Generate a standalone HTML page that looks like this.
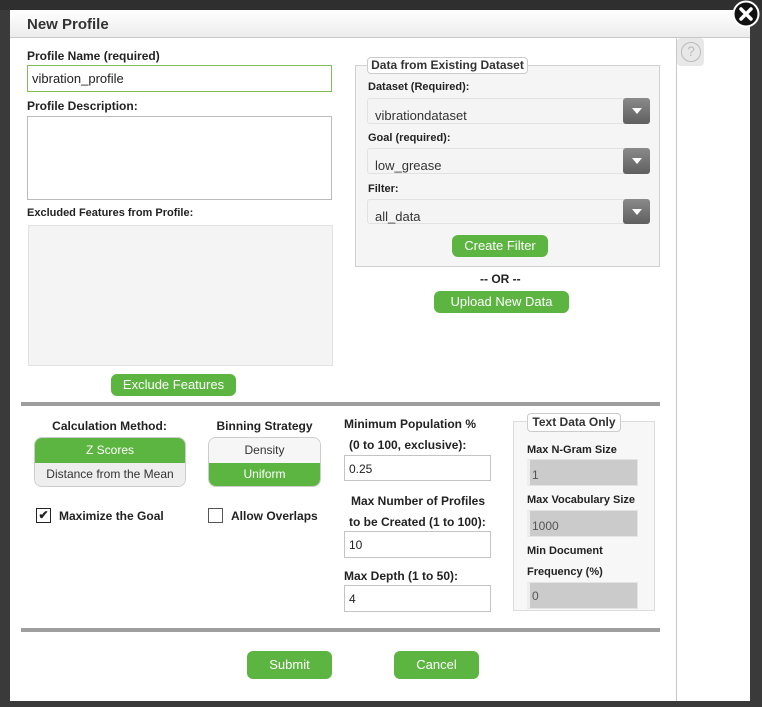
<!DOCTYPE html>
<html><head><meta charset="utf-8"><style>
*{box-sizing:border-box;margin:0;padding:0}
body{width:762px;height:707px;background:#3a3a3a;font-family:"Liberation Sans",sans-serif;position:relative;overflow:hidden;color:#222}
.a{position:absolute}
.b{font-weight:bold;font-size:12px;white-space:nowrap}
.btn{position:absolute;background:#5cb540;color:#fff;border-radius:6px;font-size:13px;text-align:center}
.inp{position:absolute;background:#fff;border:1px solid #c4c4c4;font-size:12px;padding-left:4px}
.sel{position:absolute;background:#f4f4f4;border:1px solid #e2e2e2;border-radius:3px;font-size:13px;padding-left:7px;color:#333}
.sel i{position:absolute;right:-1px;top:-1px;width:27px;bottom:-1px;background:linear-gradient(#8a8a8a,#5f5f5f);border-radius:3px}
.sel i:after{content:"";position:absolute;left:9px;top:10px;border-left:5px solid transparent;border-right:5px solid transparent;border-top:6px solid #fff}
.gi{position:absolute;background:#cbcbcb;border:1px solid #e4e4e4;border-left:3px solid #eee;font-size:12px;padding-left:2px;color:#555}
</style></head><body>
<div class="a" style="left:0;top:0;width:762px;height:10px;background:#2f2f2f"></div>
<div class="a" style="left:10px;top:10px;width:740px;height:691px;background:#fff"></div>
<div class="a" style="left:10px;top:10px;width:740px;height:28px;background:linear-gradient(#fff,#ececec);border-bottom:1px solid #c8c8c8"></div>
<div class="a" style="left:27px;top:16px;font-size:15px;font-weight:bold;color:#333">New Profile</div>
<svg class="a" style="left:732px;top:0" width="28" height="28" viewBox="0 0 28 28"><circle cx="14" cy="14" r="12.5" fill="#111" stroke="#fff" stroke-width="2"/><path d="M9 9L19 19M19 9L9 19" stroke="#fff" stroke-width="3.5" stroke-linecap="round"/></svg>
<div class="a" style="left:676px;top:38px;width:1px;height:663px;background:#c8c8c8"></div>
<div class="a" style="left:677px;top:38px;width:27px;height:28px;background:#e8e8e8;border-radius:4px"></div>
<div class="a" style="left:681px;top:42px;width:20px;height:20px;border:1.5px solid #bbb;border-radius:50%;color:#bbb;font-size:14px;text-align:center;line-height:17px">?</div>

<div class="a b" style="left:27px;top:49px">Profile Name (required)</div>
<div class="inp" style="left:27px;top:65px;width:305px;height:27px;border-color:#7cbd5a;line-height:25px;font-size:13px">vibration_profile</div>
<div class="a b" style="left:27px;top:99px">Profile Description:</div>
<div class="inp" style="left:27px;top:116px;width:305px;height:84px;border-color:#bbb"></div>
<div class="a b" style="left:27px;top:207px;font-size:11px">Excluded Features from Profile:</div>
<div class="a" style="left:28px;top:225px;width:305px;height:141px;background:#f4f4f4;border:1px solid #e2e2e2"></div>
<div class="btn" style="left:111px;top:374px;width:125px;height:22px;line-height:22px">Exclude Features</div>

<div class="a" style="left:355px;top:65px;width:305px;height:202px;background:#f5f5f5;border:1px solid #d0d0d0"></div>
<div class="a" style="left:367px;top:57px;width:161px;height:17px;background:#fff;border:1px solid #ccc;border-radius:4px;font-size:12px;font-weight:bold;text-align:center;line-height:15px;color:#333">Data from Existing Dataset</div>
<div class="a b" style="left:368px;top:81px;font-size:11px">Dataset (Required):</div>
<div class="sel" style="left:367px;top:98px;width:283px;height:26px;line-height:34px">vibrationdataset<i></i></div>
<div class="a b" style="left:368px;top:132px;font-size:11px">Goal (required):</div>
<div class="sel" style="left:367px;top:148px;width:283px;height:26px;line-height:34px">low_grease<i></i></div>
<div class="a b" style="left:368px;top:183px;font-size:11px">Filter:</div>
<div class="sel" style="left:367px;top:199px;width:283px;height:25px;line-height:34px">all_data<i></i></div>
<div class="btn" style="left:452px;top:235px;width:96px;height:22px;line-height:22px">Create Filter</div>
<div class="a b" style="left:480px;top:272px">-- OR --</div>
<div class="btn" style="left:434px;top:291px;width:135px;height:22px;line-height:22px">Upload New Data</div>

<div class="a" style="left:21px;top:402px;width:639px;height:4px;background:#9e9e9e"></div>

<div class="a b" style="left:34px;top:419px;width:151px;text-align:center">Calculation Method:</div>
<div class="a" style="left:34px;top:437px;width:152px;height:50px;border:1px solid #ccc;border-radius:8px;overflow:hidden;font-size:12px;text-align:center">
<div style="height:25px;background:#5cb540;color:#fff;line-height:25px">Z Scores</div>
<div style="height:24px;background:#eee;line-height:23px;color:#333">Distance from the Mean</div></div>
<div class="a b" style="left:208px;top:419px;width:113px;text-align:center">Binning Strategy</div>
<div class="a" style="left:208px;top:437px;width:113px;height:50px;border:1px solid #ccc;border-radius:8px;overflow:hidden;font-size:12px;text-align:center">
<div style="height:25px;background:#f6f6f6;line-height:25px;color:#333">Density</div>
<div style="height:24px;background:#5cb540;color:#fff;line-height:23px">Uniform</div></div>
<div class="a" style="left:36px;top:508px;width:15px;height:15px;border:1px solid #222;font-size:12px;line-height:13px;text-align:center;font-weight:bold">✔</div>
<div class="a b" style="left:59px;top:509px">Maximize the Goal</div>
<div class="a" style="left:208px;top:508px;width:15px;height:15px;border:1px solid #555"></div>
<div class="a b" style="left:231px;top:509px">Allow Overlaps</div>

<div class="a b" style="left:344px;top:417px">Minimum Population %</div>
<div class="a b" style="left:349px;top:438px">(0 to 100, exclusive):</div>
<div class="inp" style="left:344px;top:455px;width:147px;height:26px;line-height:26px">0.25</div>
<div class="a b" style="left:351px;top:494px">Max Number of Profiles</div>
<div class="a b" style="left:349px;top:515px">to be Created (1 to 100):</div>
<div class="inp" style="left:344px;top:531px;width:147px;height:27px;line-height:27px">10</div>
<div class="a b" style="left:344px;top:569px">Max Depth (1 to 50):</div>
<div class="inp" style="left:344px;top:585px;width:147px;height:27px;line-height:27px">4</div>

<div class="a" style="left:513px;top:421px;width:142px;height:190px;background:#f7f7f7;border:1px solid #ddd"></div>
<div class="a" style="left:527px;top:413px;width:94px;height:19px;background:#fff;border:1px solid #ccc;border-radius:4px;font-size:12px;font-weight:bold;text-align:center;line-height:17px;color:#333">Text Data Only</div>
<div class="a b" style="left:527px;top:444px;font-size:11px">Max N-Gram Size</div>
<div class="gi" style="left:527px;top:459px;width:111px;height:27px;line-height:30px">1</div>
<div class="a b" style="left:527px;top:494px;font-size:11px">Max Vocabulary Size</div>
<div class="gi" style="left:527px;top:510px;width:111px;height:27px;line-height:30px">1000</div>
<div class="a b" style="left:527px;top:545px;font-size:11px">Min Document</div>
<div class="a b" style="left:527px;top:566px;font-size:11px">Frequency (%)</div>
<div class="gi" style="left:527px;top:582px;width:111px;height:27px;line-height:27px">0</div>

<div class="a" style="left:21px;top:628px;width:639px;height:4px;background:#9e9e9e"></div>
<div class="btn" style="left:247px;top:651px;width:85px;height:28px;line-height:28px">Submit</div>
<div class="btn" style="left:394px;top:651px;width:85px;height:28px;line-height:28px">Cancel</div>
</body></html>
